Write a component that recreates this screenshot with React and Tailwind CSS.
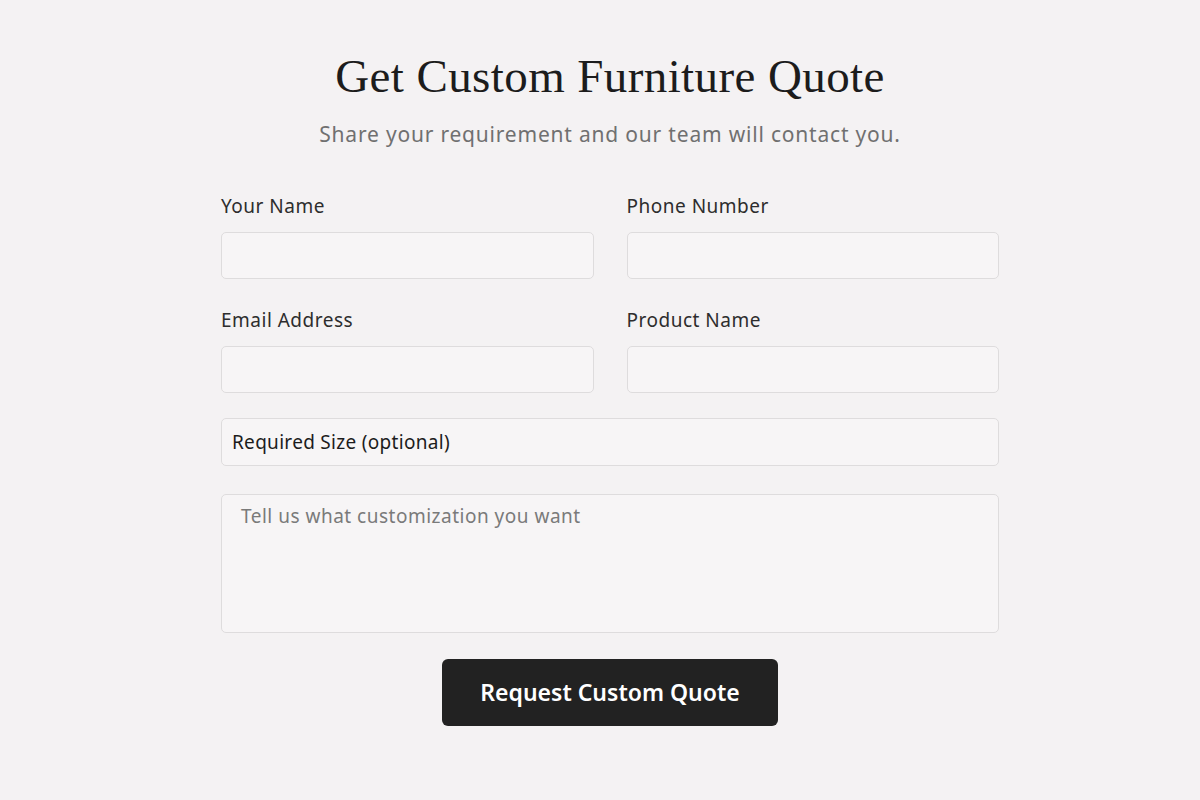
export default function App() {
  const sans = { fontFamily: '"Noto Sans", "Open Sans", sans-serif' };
  return (
    <div className="min-h-[800px] w-full bg-[#f4f2f3]" style={sans}>
      <div className="ml-[221px] w-[778px] pt-[50px]">
        <h1
          className="text-center text-[47px] leading-[52px] tracking-[0.4px] text-[#1c1c1c]"
          style={{ fontFamily: '"Liberation Serif", "DejaVu Serif", serif' }}
        >
          Get Custom Furniture Quote
        </h1>
        <p className="mt-[18px] text-center text-[21px] leading-[28px] tracking-[0.8px] text-[#707070]">
          Share your requirement and our team will contact you.
        </p>
        <div className="mt-[45px] grid grid-cols-2 gap-x-[33px]">
          {[
            ["Your Name", "Phone Number"],
            ["Email Address", "Product Name"],
          ].map((row, i) => (
            <div key={i} className={"col-span-2 grid grid-cols-2 gap-x-[33px] " + (i ? "mt-[28px]" : "")}>
              {row.map((l) => (
                <div key={l}>
                  <label className="block text-[19px] leading-[26px] tracking-[0.5px] text-[#2d2d2d]">{l}</label>
                  <input className="mt-[13px] block h-[47px] w-full rounded-[5px] border border-[#dedcdd] bg-[#f7f5f6] outline-none" />
                </div>
              ))}
            </div>
          ))}
        </div>
        <input
          placeholder="Required Size (optional)"
          className="mt-[25px] block h-[48px] w-full rounded-[5px] border border-[#dedcdd] bg-[#f7f5f6] px-[10px] text-[19px] tracking-[0.3px] text-[#1c1c1c] placeholder:text-[#1c1c1c] outline-none"
        />
        <textarea
          placeholder="Tell us what customization you want"
          className="mt-[28px] block h-[139px] w-full resize-none rounded-[5px] border border-[#dedcdd] bg-[#f7f5f6] px-[19px] py-[8px] text-[19px] leading-[26px] tracking-[0.5px] text-[#777] placeholder:text-[#7a7a7a] outline-none"
        />
        <div className="mt-[26px] flex justify-center">
          <button className="h-[67px] w-[336px] rounded-[6px] bg-[#222222] text-[23px] font-semibold text-white">
            Request Custom Quote
          </button>
        </div>
      </div>
    </div>
  );
}
